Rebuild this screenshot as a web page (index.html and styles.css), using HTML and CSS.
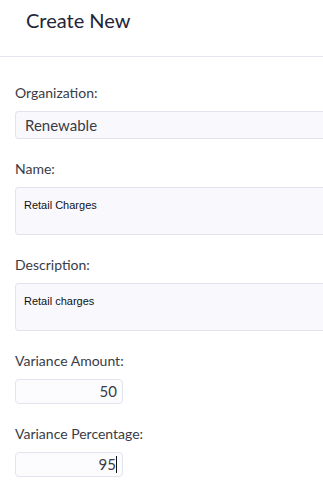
FILE: index.html
```html
<!DOCTYPE html>
<html>
<head>
<meta charset="utf-8">
<link rel="stylesheet" href="styles.css">
</head>
<body>
<div class="header"><h1 class="title">Create New</h1></div>
<form class="form">
  <div class="field">
    <label class="label">Organization:</label>
    <div class="input select">Renewable</div>
  </div>
  <div class="field">
    <label class="label">Name:</label>
    <div class="input area">Retail Charges</div>
  </div>
  <div class="field">
    <label class="label">Description:</label>
    <div class="input area">Retail charges</div>
  </div>
  <div class="field">
    <label class="label">Variance Amount:</label>
    <div class="input num">50</div>
  </div>
  <div class="field">
    <label class="label">Variance Percentage:</label>
    <div class="input num">95<span class="caret"></span></div>
  </div>
</form>
</body>
</html>
```
FILE: styles.css
```css
html, body { margin: 0; padding: 0; background: #fff; overflow: hidden; }
body { font-family: Lato, "Noto Sans", sans-serif; color: #3a3b45; width: 323px; }
.header { height: 57px; border-bottom: 1px solid #e6e5ee; box-sizing: border-box; padding-left: 26px; display: flex; align-items: flex-start; }
.title { margin: 8px 0 0; font-size: 20px; font-weight: 400; color: #232536; line-height: 24px; }
.form { padding: 26px 0 0 15px; display: flex; flex-direction: column; gap: 20px; }
.field { display: flex; flex-direction: column; gap: 8px; }
.label { font-size: 14px; line-height: 20px; height: 20px; color: #3a3b45; }
.input { background: #f9f9fd; border: 1px solid #e3e3ee; border-radius: 4px; box-sizing: border-box; }
.select, .area { width: 308px; border-right: 0; border-radius: 4px 0 0 4px; }
.select { height: 28px; font-size: 15px; line-height: 26px; padding-left: 9px; color: #3a3b45; }
.area { height: 48px; font-size: 11px; line-height: 14px; padding: 10px 8px; color: #111; font-family: "Liberation Sans", Arial, sans-serif; }
.num { width: 108px; height: 25px; font-size: 15px; line-height: 23px; text-align: right; padding-right: 5px; color: #3a3b45; background: #fcfcfe; }
.caret { display: inline-block; width: 1px; height: 17px; background: #111; vertical-align: -3px; }
```
